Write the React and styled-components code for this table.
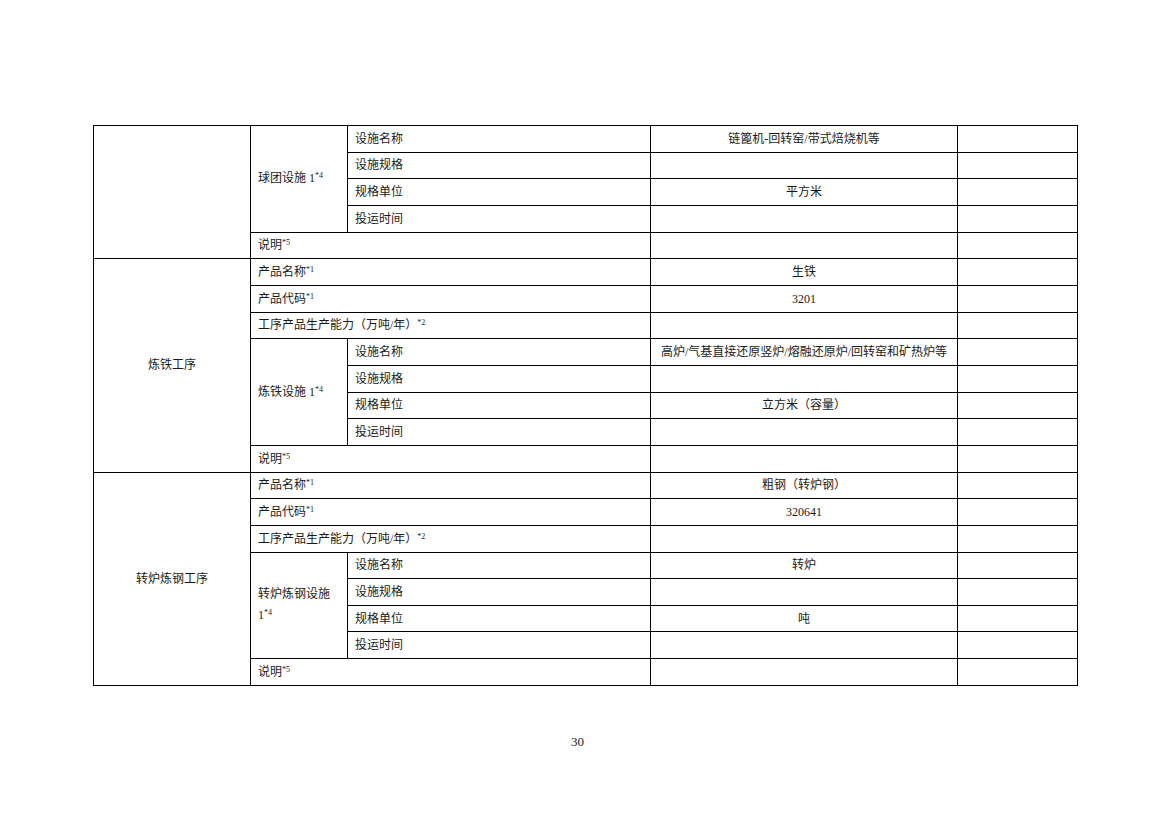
import React from 'react'
import styled, { createGlobalStyle } from 'styled-components'

const GlobalStyle = createGlobalStyle`
  html, body {
    margin: 0;
    padding: 0;
    background: #fff;
  }
  body {
    font-family: "Liberation Serif", "Noto Sans CJK SC", serif;
    color: #1a1a1a;
  }
`

const Page = styled.div`
  width: 1169px;
  height: 826px;
  box-sizing: border-box;
  padding: 125px 0 0 93px;
  display: flex;
  flex-direction: column;
`

const Sheet = styled.table`
  width: 985px;
  table-layout: fixed;
  border-collapse: collapse;
  font-size: 12px;
`

const Row = styled.tr`
  height: 26.67px;
`

const Cell = styled.td`
  border: 1px solid #000;
  padding: 0 7px;
  text-align: ${(p) => (p.$center ? 'center' : 'left')};
  vertical-align: middle;
  line-height: ${(p) => (p.$wrap ? '21px' : '20px')};
  white-space: ${(p) => (p.$wrap ? 'normal' : 'nowrap')};
`

const Note = styled.sup`
  font-size: 8px;
  line-height: 0;
  vertical-align: 4px;
  color: #222;
`

const PageNumber = styled.div`
  width: 985px;
  margin-top: 48px;
  padding-right: 16px;
  box-sizing: border-box;
  text-align: center;
  font-size: 13px;
  line-height: 16px;
`

const sections = [
  {
    name: '',
    products: [],
    facility: '球团设施 1',
    items: [
      ['设施名称', '链篦机-回转窑/带式焙烧机等'],
      ['设施规格', ''],
      ['规格单位', '平方米'],
      ['投运时间', ''],
    ],
  },
  {
    name: '炼铁工序',
    products: [
      ['产品名称', '1', '生铁'],
      ['产品代码', '1', '3201'],
      ['工序产品生产能力（万吨/年）', '2', ''],
    ],
    facility: '炼铁设施 1',
    items: [
      ['设施名称', '高炉/气基直接还原竖炉/熔融还原炉/回转窑和矿热炉等'],
      ['设施规格', ''],
      ['规格单位', '立方米（容量）'],
      ['投运时间', ''],
    ],
  },
  {
    name: '转炉炼钢工序',
    products: [
      ['产品名称', '1', '粗钢（转炉钢）'],
      ['产品代码', '1', '320641'],
      ['工序产品生产能力（万吨/年）', '2', ''],
    ],
    facility: '转炉炼钢设施 1',
    items: [
      ['设施名称', '转炉'],
      ['设施规格', ''],
      ['规格单位', '吨'],
      ['投运时间', ''],
    ],
  },
]

const Section = ({ section }) => {
  const span = section.products.length + section.items.length + 1
  const head = <Cell $center rowSpan={span}>{section.name}</Cell>
  return (
    <>
      {section.products.map(([label, note, value], i) => (
        <Row key={'p' + i}>
          {i === 0 && head}
          <Cell colSpan={2}>
            {label}
            <Note>*{note}</Note>
          </Cell>
          <Cell $center>{value}</Cell>
          <Cell />
        </Row>
      ))}
      {section.items.map(([label, value], i) => (
        <Row key={'f' + i}>
          {i === 0 && section.products.length === 0 && head}
          {i === 0 && (
            <Cell $wrap rowSpan={section.items.length}>
              {section.facility}
              <Note>*4</Note>
            </Cell>
          )}
          <Cell>{label}</Cell>
          <Cell $center>{value}</Cell>
          <Cell />
        </Row>
      ))}
      <Row>
        <Cell colSpan={2}>
          说明<Note>*5</Note>
        </Cell>
        <Cell />
        <Cell />
      </Row>
    </>
  )
}

const App = () => (
  <Page>
    <GlobalStyle />
    <Sheet>
      <colgroup>
        <col style={{ width: 157 }} />
        <col style={{ width: 97 }} />
        <col style={{ width: 303 }} />
        <col style={{ width: 307 }} />
        <col style={{ width: 120 }} />
      </colgroup>
      <tbody>
        {sections.map((s, i) => (
          <Section key={i} section={s} />
        ))}
      </tbody>
    </Sheet>
    <PageNumber>30</PageNumber>
  </Page>
)

export default App
